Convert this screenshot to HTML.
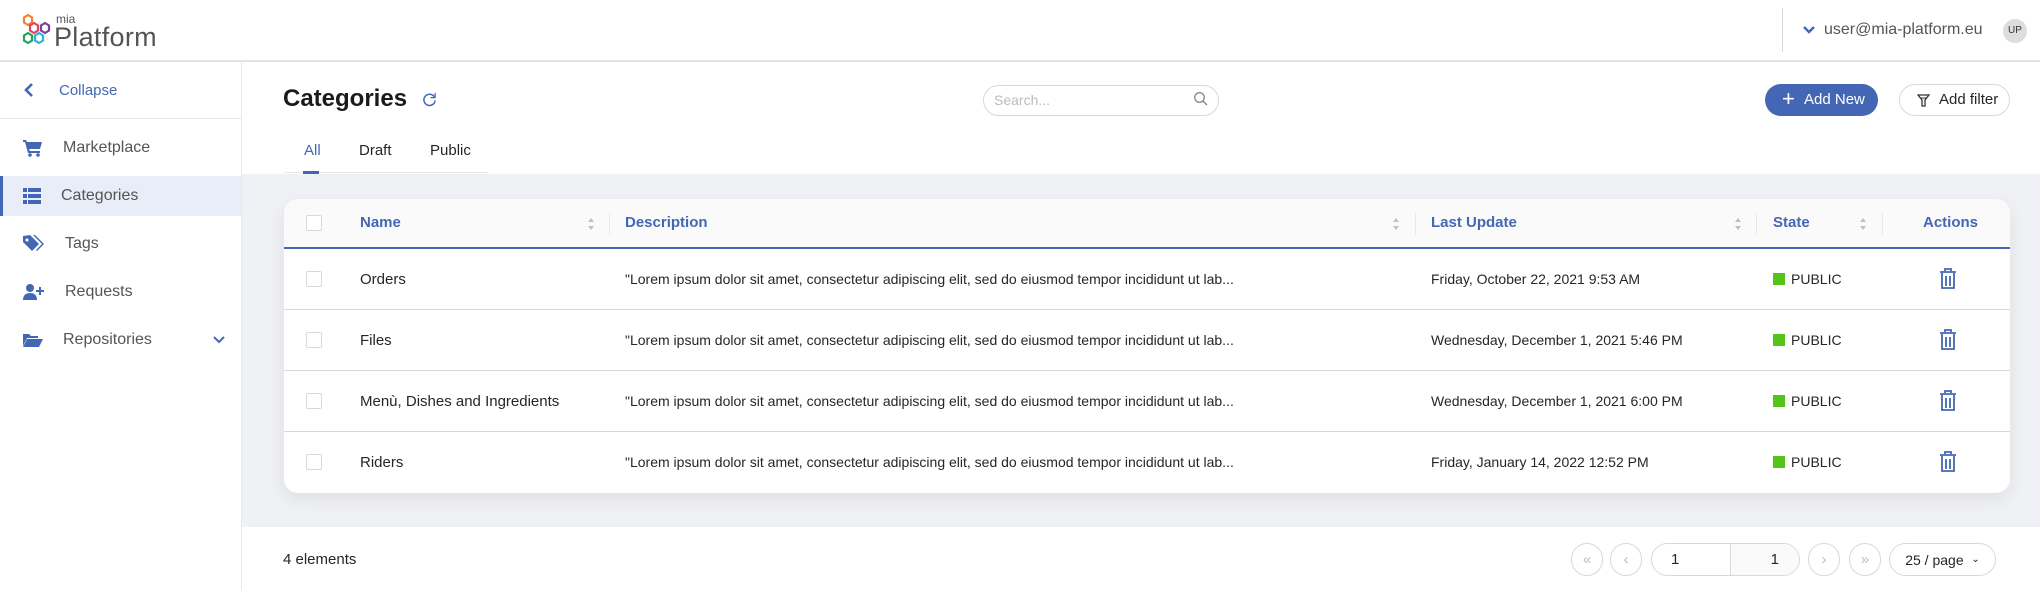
<!DOCTYPE html>
<html><head><meta charset="utf-8"><style>
*{box-sizing:border-box;margin:0;padding:0}
body{width:2040px;height:590px;overflow:hidden;background:#fff;font-family:"Liberation Sans",sans-serif;color:#262626;position:relative;font-size:15px}
.a{position:absolute}
.blue{color:#4467b5}
.side{left:0;top:62px;width:242px;height:528px;border-right:1px solid #e8e8e8}
.si{position:absolute;left:0;width:241px;height:40px;display:flex;align-items:center;font-size:16px;color:#555}
.si svg{position:absolute;left:23px}
.si span{position:absolute}
.gray{left:242px;top:174px;width:1798px;height:353px;background:#f0f1f5}
.card{left:284px;top:199px;width:1726px;height:294px;background:#fff;border-radius:14px;box-shadow:0 6px 18px rgba(0,0,0,.08);overflow:hidden}
.th{position:absolute;top:0;left:0;width:100%;height:50px;background:#fafafa;border-bottom:2px solid #4467b5}
.hc{position:absolute;top:0;height:48px;line-height:48px;font-weight:bold;color:#4467b5;font-size:15px}
.sep{position:absolute;top:14px;width:1px;height:22px;background:#e8e8e8}
.sort{position:absolute;top:18px;width:8px;height:14px}
.row{position:absolute;left:0;width:100%;height:61px;border-bottom:1px solid #d9d9d9}
.c{position:absolute;top:0;line-height:61px;white-space:nowrap;font-size:15px}
.cb{position:absolute;width:16px;height:16px;border:1px solid #d9d9d9;border-radius:2px;background:#fff}
.pub{position:absolute;top:24px;width:12px;height:12px;background:#52c41a}
.pg{position:absolute;top:543px;height:33px;border:1px solid #d9d9d9;border-radius:17px;background:#fff;display:flex;align-items:center;justify-content:center;color:#bbb;font-size:15px}
</style></head><body>
<div class="a" style="left:0;top:0;width:2040px;height:62px;border-bottom:2px solid #e3e3e3"></div>
<svg class="a" style="left:21px;top:14px" width="32" height="32" viewBox="0 0 32 32">
<g fill="none" stroke-width="2.2">
<polygon points="7,1 11,3.5 11,8.5 7,11 3,8.5 3,3.5" stroke="#f08232"/>
<polygon points="13,9 17,11.5 17,16.5 13,19 9,16.5 9,11.5" stroke="#e8415a"/>
<polygon points="24,9 28,11.5 28,16.5 24,19 20,16.5 20,11.5" stroke="#7b3fa0"/>
<polygon points="7,19 11,21.5 11,26.5 7,29 3,26.5 3,21.5" stroke="#23a15a"/>
<polygon points="18,19 22,21.5 22,26.5 18,29 14,26.5 14,21.5" stroke="#2cb3e6"/>
</g></svg>
<div class="a" style="left:56px;top:12px;font-size:12px;color:#555">mia</div>
<div class="a" style="left:54px;top:22px;font-size:27px;color:#555;letter-spacing:.3px">Platform</div>
<div class="a" style="left:1782px;top:8px;width:1px;height:44px;background:#d9d9d9"></div>
<svg class="a" style="left:1802px;top:25px" width="14" height="10" viewBox="0 0 14 10"><path d="M2 2l5 5 5-5" stroke="#4467b5" stroke-width="2.4" fill="none"/></svg>
<div class="a" style="left:1824px;top:21px;font-size:16px;color:#555">user@mia-platform.eu</div>
<div class="a" style="left:2003px;top:19px;width:24px;height:24px;border-radius:12px;background:#ddd;font-size:10px;line-height:24px;text-align:center;color:#333">UP</div>
<div class="a side">
 <div class="si" style="top:0;height:57px;border-bottom:1px solid #e8e8e8"><svg width="12" height="16" viewBox="0 0 12 16"><path d="M9 2L3 8l6 6" stroke="#4467b5" stroke-width="2.6" fill="none"/></svg><span style="left:59px;color:#4467b5;font-size:15px">Collapse</span></div>
 <div class="si" style="top:66px"><svg width="20" height="18" viewBox="0 0 20 18"><path d="M0 1h3l1 2h15l-2 7H6l1 2h10v2H5L2 3H0z" fill="#4467b5"/><circle cx="7" cy="16" r="1.8" fill="#4467b5"/><circle cx="15" cy="16" r="1.8" fill="#4467b5"/></svg><span style="left:63px">Marketplace</span></div>
 <div class="si" style="top:114px;background:#e9edf7;border-left:3px solid #4467b5"><svg width="18" height="16" viewBox="0 0 18 16" style="left:20px"><g fill="#4467b5"><rect x="0" y="0" width="4" height="4"/><rect x="5" y="0" width="13" height="4"/><rect x="0" y="6" width="4" height="4"/><rect x="5" y="6" width="13" height="4"/><rect x="0" y="12" width="4" height="4"/><rect x="5" y="12" width="13" height="4"/></g></svg><span style="left:58px">Categories</span></div>
 <div class="si" style="top:162px"><svg width="22" height="18" viewBox="0 0 22 18"><path d="M0 1v6l9 9 7-7-9-9z" fill="#4467b5"/><path d="M10 0h2l9 9-7 7-1-1 6-6z" fill="#4467b5"/><circle cx="4" cy="5" r="1.5" fill="#fff"/></svg><span style="left:65px">Tags</span></div>
 <div class="si" style="top:210px"><svg width="22" height="16" viewBox="0 0 22 16"><circle cx="7" cy="4" r="4" fill="#4467b5"/><path d="M0 16c0-5 3-7 7-7s7 2 7 7z" fill="#4467b5"/><path d="M17 3v8M13 7h8" stroke="#4467b5" stroke-width="2"/></svg><span style="left:65px">Requests</span></div>
 <div class="si" style="top:258px"><svg width="20" height="14" viewBox="0 0 20 14"><path d="M0 1h6l2 2h7v2H4L0 13z" fill="#4467b5"/><path d="M4 6h16l-4 8H0z" fill="#4467b5"/></svg><span style="left:63px">Repositories</span><svg width="12" height="8" viewBox="0 0 12 8" style="left:213px"><path d="M1 1l5 5 5-5" stroke="#4467b5" stroke-width="2" fill="none"/></svg></div>
</div>
<div class="a" style="left:283px;top:85px;font-size:24px;font-weight:bold;color:#1a1a1a">Categories</div>
<svg class="a" style="left:422px;top:92px" width="15" height="15" viewBox="0 0 16 16"><path d="M13 5A6 6 0 1 0 14 9" stroke="#4467b5" stroke-width="1.6" fill="none"/><path d="M14 1v5H9" stroke="#4467b5" stroke-width="1.4" fill="none"/></svg>
<div class="a" style="left:983px;top:85px;width:236px;height:31px;border:1px solid #d9d9d9;border-radius:16px;"></div>
<div class="a" style="left:994px;top:92px;font-size:14px;color:#bbb">Search...</div>
<svg class="a" style="left:1193px;top:91px" width="16" height="16" viewBox="0 0 16 16"><circle cx="6.5" cy="6.5" r="4.8" stroke="#888" stroke-width="1.3" fill="none"/><path d="M10 10l4 4" stroke="#888" stroke-width="1.4"/></svg>
<div class="a" style="left:1765px;top:84px;width:113px;height:32px;border-radius:16px;background:#4467b5;color:#fff;font-size:15px;line-height:32px;"><span style="position:absolute;left:17px;top:-1px;font-size:22px">+</span><span style="position:absolute;left:39px">Add New</span></div>
<div class="a" style="left:1899px;top:84px;width:111px;height:32px;border-radius:16px;border:1px solid #d9d9d9;font-size:15px;line-height:30px;"><svg style="position:absolute;left:17px;top:9px" width="13" height="13" viewBox="0 0 13 13"><path d="M1 1h11L8 6v6H5V6z" stroke="#333" stroke-width="1.3" fill="none"/><path d="M3 4h7" stroke="#333"/></svg><span style="position:absolute;left:39px">Add filter</span></div>
<div class="a" style="left:283px;top:172px;width:205px;height:1px;background:#e8e8e8"></div>
<div class="a blue" style="left:304px;top:142px;font-size:15px">All</div>
<div class="a" style="left:303px;top:171px;width:16px;height:3px;background:#4467b5"></div>
<div class="a" style="left:359px;top:142px;font-size:15px">Draft</div>
<div class="a" style="left:430px;top:142px;font-size:15px">Public</div>
<div class="a gray"></div>
<div class="a card">
 <div class="th">
  <div class="cb" style="left:22px;top:16px"></div>
  <div class="hc" style="left:76px">Name</div>
  <svg class="sort" style="left:303px" viewBox="0 0 8 14"><path d="M4 1l3 4H1zM4 13l3-4H1z" fill="#bfbfbf"/></svg>
  <div class="sep" style="left:325px"></div>
  <div class="hc" style="left:341px">Description</div>
  <svg class="sort" style="left:1108px" viewBox="0 0 8 14"><path d="M4 1l3 4H1zM4 13l3-4H1z" fill="#bfbfbf"/></svg>
  <div class="sep" style="left:1131px"></div>
  <div class="hc" style="left:1147px">Last Update</div>
  <svg class="sort" style="left:1450px" viewBox="0 0 8 14"><path d="M4 1l3 4H1zM4 13l3-4H1z" fill="#bfbfbf"/></svg>
  <div class="sep" style="left:1472px"></div>
  <div class="hc" style="left:1489px">State</div>
  <svg class="sort" style="left:1575px" viewBox="0 0 8 14"><path d="M4 1l3 4H1zM4 13l3-4H1z" fill="#bfbfbf"/></svg>
  <div class="sep" style="left:1598px"></div>
  <div class="hc" style="left:1639px">Actions</div>
 </div>
 <div id="rows"></div>
</div>
<div class="a" style="left:283px;top:551px;font-size:15px">4 elements</div>
<div class="pg" style="left:1571px;width:32px">«</div>
<div class="pg" style="left:1610px;width:32px">‹</div>
<div class="pg" style="left:1651px;width:149px;justify-content:flex-start;color:#262626;overflow:hidden"><span style="position:absolute;left:19px">1</span><div style="position:absolute;left:78px;top:0;width:71px;height:33px;background:#fafafa;border-left:1px solid #d9d9d9"></div><span style="position:absolute;right:20px">1</span></div>
<div class="pg" style="left:1808px;width:32px">›</div>
<div class="pg" style="left:1849px;width:32px">»</div>
<div class="pg" style="left:1889px;width:107px;color:#262626;font-size:14px">25 / page&nbsp;&nbsp;<span style="font-size:10px">⌄</span></div>
<script>
var d=[["Orders","Friday, October 22, 2021 9:53 AM"],["Files","Wednesday, December 1, 2021 5:46 PM"],["Menù, Dishes and Ingredients","Wednesday, December 1, 2021 6:00 PM"],["Riders","Friday, January 14, 2022 12:52 PM"]];
var h="";d.forEach(function(r,i){h+='<div class="row" style="top:'+(50+i*61)+'px;'+(i==3?'border-bottom:none':'')+'"><div class="cb" style="left:22px;top:22px"></div><div class="c" style="left:76px">'+r[0]+'</div><div class="c" style="left:341px;font-size:14px">"Lorem ipsum dolor sit amet, consectetur adipiscing elit, sed do eiusmod tempor incididunt ut lab...</div><div class="c" style="left:1147px;font-size:14px">'+r[1]+'</div><div class="pub" style="left:1489px"></div><div class="c" style="left:1507px;font-size:14px">PUBLIC</div><svg style="position:absolute;left:1655px;top:19px" width="18" height="22" viewBox="0 0 18 22"><path d="M6 3V1h6v2M1 4h16M3 5v15h12V5M7 8v10M11 8v10" stroke="#4467b5" stroke-width="1.8" fill="none"/></svg></div>'});
document.getElementById("rows").innerHTML=h;
</script>
</body></html>
